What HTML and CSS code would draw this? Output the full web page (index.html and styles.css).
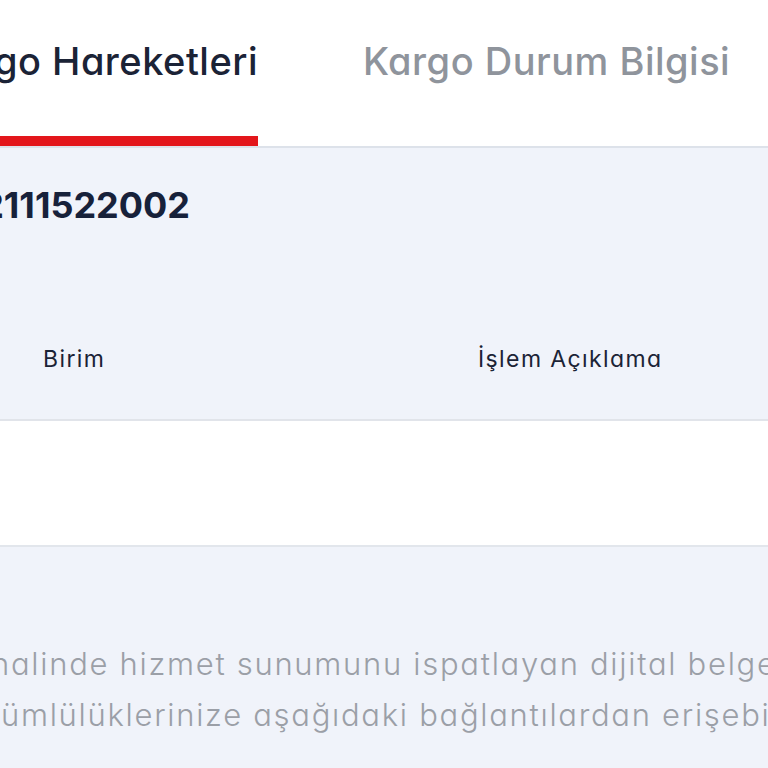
FILE: index.html
```html
<!DOCTYPE html>
<html lang="tr">
<head>
<meta charset="utf-8">
<link rel="stylesheet" href="styles.css">
</head>
<body>
<header class="tabs">
  <div class="tab tab-active"><span class="tab-label">Kargo Hareketleri</span></div>
  <div class="tab"><span class="tab-label">Kargo Durum Bilgisi</span></div>
</header>
<main class="content">
  <div class="tracking"><span class="tracking-no">Takip No: 2111522002</span></div>
  <div class="table">
    <div class="thead">
      <div class="th">Birim</div>
      <div class="th">İşlem Açıklama</div>
    </div>
    <div class="trow"></div>
  </div>
  <div class="info">
    <p class="info-line info-line-1">halinde hizmet sunumunu ispatlayan dijital belgedir.</p>
    <p class="info-line info-line-2">yükümlülüklerinize aşağıdaki bağlantılardan erişebilirsiniz.</p>
  </div>
</main>
</body>
</html>
```
FILE: styles.css
```css
html, body {
  margin: 0;
  padding: 0;
}
body {
  background: #f0f3fa;
  font-family: Inter, "Noto Sans", sans-serif;
  font-feature-settings: "cv11" 1;
  color: #1b2336;
  width: 768px;
  height: 768px;
  overflow: hidden;
}
.tabs {
  display: flex;
  background: #ffffff;
  border-bottom: 2px solid #dde2ea;
  box-sizing: border-box;
  height: 148px;
}
.tab {
  display: flex;
  box-sizing: border-box;
  height: 146px;
  padding-top: 38px;
  white-space: nowrap;
}
.tab-active {
  flex: 0 0 258px;
  min-width: 0;
  justify-content: flex-end;
  border-bottom: 10px solid #e3161b;
}
.tab + .tab {
  margin-left: 105px;
}
.tab-label {
  font-size: 38px;
  line-height: 46px;
  font-weight: 500;
  letter-spacing: 0.5px;
  color: #1b2336;
}
.tab + .tab .tab-label {
  color: #8f949c;
}
.content {
  display: flex;
  flex-direction: column;
}
.tracking {
  display: flex;
  justify-content: flex-end;
  width: 190px;
  padding-top: 35px;
  white-space: nowrap;
}
.tracking-no {
  font-size: 36px;
  line-height: 44px;
  font-weight: 700;
  color: #17213a;
}
.table {
  margin-top: 60px;
}
.thead {
  display: grid;
  grid-template-columns: 435px 1fr;
  padding: 58px 0 46px 43px;
  border-bottom: 2px solid #e1e4ea;
}
.th {
  font-size: 23px;
  line-height: 28px;
  letter-spacing: 1.4px;
  color: #1b2336;
}
.trow {
  height: 124px;
  background: #ffffff;
  border-bottom: 2px solid #e2e6ec;
}
.info {
  padding-top: 99px;
  display: flex;
  flex-direction: column;
  gap: 15px;
  white-space: nowrap;
}
.info-line {
  margin: 0;
  font-size: 31px;
  line-height: 36px;
  font-weight: 300;
  letter-spacing: 1.7px;
  color: #9b9fa7;
}
.info-line-1 {
  margin-left: -9px;
}
.info-line-2 {
  margin-left: -56px;
}
```
